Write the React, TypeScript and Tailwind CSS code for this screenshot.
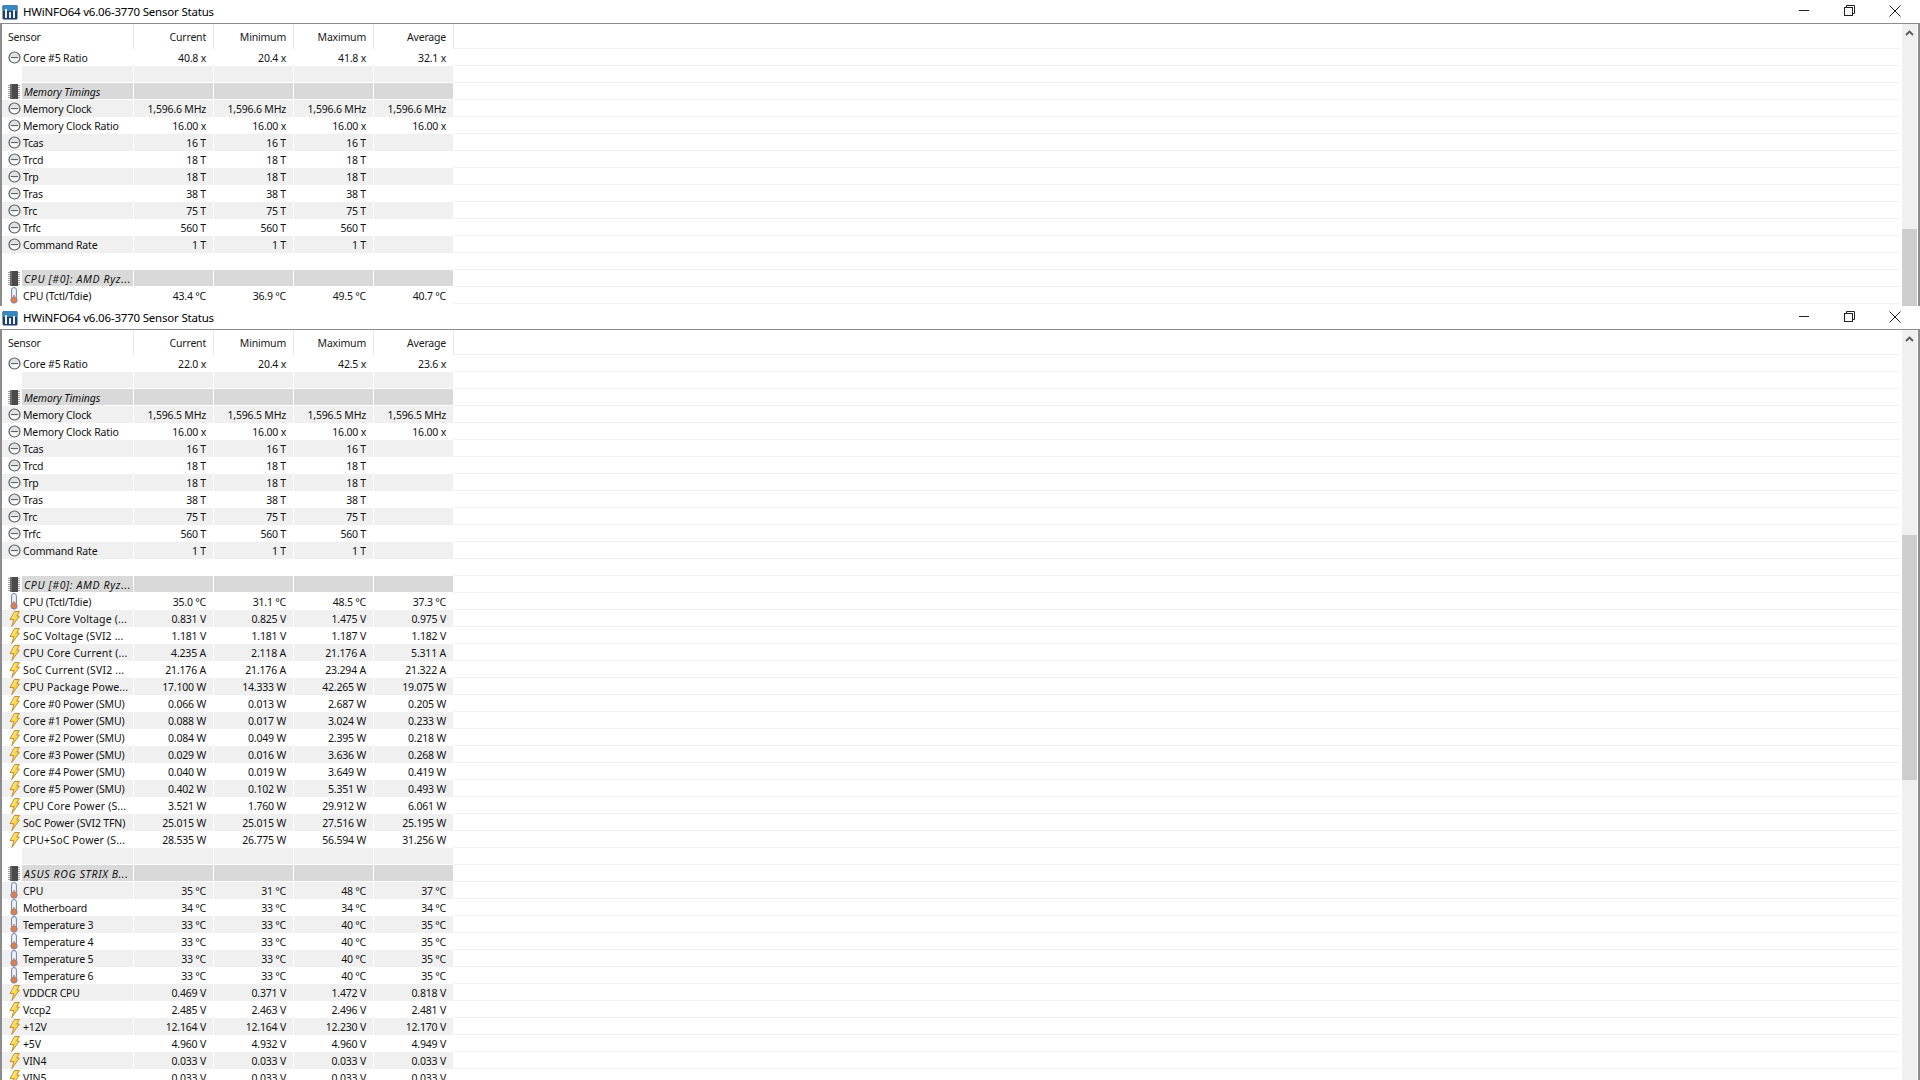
import React from "react";

type Kind = "clock" | "temp" | "volt";
type Row =
  | { t: "blank" }
  | { t: "section"; name: string }
  | { t: "row"; icon: Kind; name: string; v: string[] };

const r = (icon: Kind, name: string, a: string, b: string, c: string, d: string): Row => ({ t: "row", icon, name, v: [a, b, c, d] });
const blank: Row = { t: "blank" };
const sec = (name: string): Row => ({ t: "section", name });

const timings: Row[] = [
  r("clock", "Tcas", "16 T", "16 T", "16 T", ""),
  r("clock", "Trcd", "18 T", "18 T", "18 T", ""),
  r("clock", "Trp", "18 T", "18 T", "18 T", ""),
  r("clock", "Tras", "38 T", "38 T", "38 T", ""),
  r("clock", "Trc", "75 T", "75 T", "75 T", ""),
  r("clock", "Trfc", "560 T", "560 T", "560 T", ""),
  r("clock", "Command Rate", "1 T", "1 T", "1 T", ""),
];

const top: Row[] = [
  r("clock", "Core #5 Ratio", "40.8 x", "20.4 x", "41.8 x", "32.1 x"),
  blank,
  sec("Memory Timings"),
  r("clock", "Memory Clock", "1,596.6 MHz", "1,596.6 MHz", "1,596.6 MHz", "1,596.6 MHz"),
  r("clock", "Memory Clock Ratio", "16.00 x", "16.00 x", "16.00 x", "16.00 x"),
  ...timings,
  blank,
  sec("CPU [#0]: AMD Ryz..."),
  r("temp", "CPU (Tctl/Tdie)", "43.4 °C", "36.9 °C", "49.5 °C", "40.7 °C"),
];

const bottom: Row[] = [
  r("clock", "Core #5 Ratio", "22.0 x", "20.4 x", "42.5 x", "23.6 x"),
  blank,
  sec("Memory Timings"),
  r("clock", "Memory Clock", "1,596.5 MHz", "1,596.5 MHz", "1,596.5 MHz", "1,596.5 MHz"),
  r("clock", "Memory Clock Ratio", "16.00 x", "16.00 x", "16.00 x", "16.00 x"),
  ...timings,
  blank,
  sec("CPU [#0]: AMD Ryz..."),
  r("temp", "CPU (Tctl/Tdie)", "35.0 °C", "31.1 °C", "48.5 °C", "37.3 °C"),
  r("volt", "CPU Core Voltage (...", "0.831 V", "0.825 V", "1.475 V", "0.975 V"),
  r("volt", "SoC Voltage (SVI2 ...", "1.181 V", "1.181 V", "1.187 V", "1.182 V"),
  r("volt", "CPU Core Current (...", "4.235 A", "2.118 A", "21.176 A", "5.311 A"),
  r("volt", "SoC Current (SVI2 ...", "21.176 A", "21.176 A", "23.294 A", "21.322 A"),
  r("volt", "CPU Package Powe...", "17.100 W", "14.333 W", "42.265 W", "19.075 W"),
  r("volt", "Core #0 Power (SMU)", "0.066 W", "0.013 W", "2.687 W", "0.205 W"),
  r("volt", "Core #1 Power (SMU)", "0.088 W", "0.017 W", "3.024 W", "0.233 W"),
  r("volt", "Core #2 Power (SMU)", "0.084 W", "0.049 W", "2.395 W", "0.218 W"),
  r("volt", "Core #3 Power (SMU)", "0.029 W", "0.016 W", "3.636 W", "0.268 W"),
  r("volt", "Core #4 Power (SMU)", "0.040 W", "0.019 W", "3.649 W", "0.419 W"),
  r("volt", "Core #5 Power (SMU)", "0.402 W", "0.102 W", "5.351 W", "0.493 W"),
  r("volt", "CPU Core Power (S...", "3.521 W", "1.760 W", "29.912 W", "6.061 W"),
  r("volt", "SoC Power (SVI2 TFN)", "25.015 W", "25.015 W", "27.516 W", "25.195 W"),
  r("volt", "CPU+SoC Power (S...", "28.535 W", "26.775 W", "56.594 W", "31.256 W"),
  blank,
  sec("ASUS ROG STRIX B..."),
  r("temp", "CPU", "35 °C", "31 °C", "48 °C", "37 °C"),
  r("temp", "Motherboard", "34 °C", "33 °C", "34 °C", "34 °C"),
  r("temp", "Temperature 3", "33 °C", "33 °C", "40 °C", "35 °C"),
  r("temp", "Temperature 4", "33 °C", "33 °C", "40 °C", "35 °C"),
  r("temp", "Temperature 5", "33 °C", "33 °C", "40 °C", "35 °C"),
  r("temp", "Temperature 6", "33 °C", "33 °C", "40 °C", "35 °C"),
  r("volt", "VDDCR CPU", "0.469 V", "0.371 V", "1.472 V", "0.818 V"),
  r("volt", "Vccp2", "2.485 V", "2.463 V", "2.496 V", "2.481 V"),
  r("volt", "+12V", "12.164 V", "12.164 V", "12.230 V", "12.170 V"),
  r("volt", "+5V", "4.960 V", "4.932 V", "4.960 V", "4.949 V"),
  r("volt", "VIN4", "0.033 V", "0.033 V", "0.033 V", "0.033 V"),
  r("volt", "VIN5", "0.033 V", "0.033 V", "0.033 V", "0.033 V"),
];

function ClockIcon() {
  return (
    <svg width="13" height="13" viewBox="0 0 13 13">
      <circle cx="6.5" cy="6.5" r="5.5" fill="#dfe2e2" stroke="#5a6062" strokeWidth="1.2" />
      <path d="M2.5 9 A4.6 4.6 0 0 0 10.5 9 L10.5 7 H2.5 Z" fill="#fafafa" />
      <path d="M3 6.6 H10" stroke="#555" strokeWidth="1" />
    </svg>
  );
}

function TempIcon() {
  return (
    <svg width="10" height="17" viewBox="0 0 10 17">
      <rect x="2.6" y="0.5" width="4.8" height="12" rx="2.4" fill="#eef2fa" stroke="#6c80ac" />
      <circle cx="5" cy="13" r="3.2" fill="#d9804f" stroke="#7f86a8" strokeWidth="0.9" />
      <rect x="4.3" y="8" width="1.4" height="4" fill="#d9804f" />
    </svg>
  );
}

function VoltIcon() {
  return (
    <svg width="11" height="16" viewBox="0 0 11 16">
      <path d="M5.5 0.5 H10.4 L7.8 5 H10.4 L2.8 15.6 L4.8 8.6 H1 Z" fill="#f9d84e" stroke="#b9852a" strokeWidth="0.9" strokeLinejoin="round" />
      <path d="M6.2 1.6 L3.2 7.4" stroke="#fff3b0" strokeWidth="1" />
    </svg>
  );
}

function ChipIcon() {
  return (
    <svg width="12" height="15" viewBox="0 0 12 15">
      <path d="M0 1.5H12M0 3.5H12M0 5.5H12M0 7.5H12M0 9.5H12M0 11.5H12M0 13.5H12" stroke="#a0a0a0" strokeWidth="1" />
      <rect x="2" y="0" width="8" height="15" fill="#4a4a4a" />
      <rect x="2" y="0" width="2" height="15" fill="#6c6c6c" />
    </svg>
  );
}

function AppIcon() {
  return (
    <svg width="16" height="16" viewBox="0 0 16 16">
      <rect x="0.5" y="1" width="15" height="14.5" rx="1.5" fill="#1c3f68" />
      <rect x="0.5" y="1" width="15" height="6" rx="1.5" fill="#3a86bd" />
      <rect x="3" y="5" width="2" height="9" fill="#e8f0f6" />
      <rect x="7" y="8" width="2" height="6" fill="#e8f0f6" />
      <rect x="11" y="6" width="2" height="8" fill="#e8f0f6" />
    </svg>
  );
}

const icons = { clock: <ClockIcon />, temp: <TempIcon />, volt: <VoltIcon /> };

function DataRow({ row, index }: { row: Row; index: number }) {
  const gray = index % 2 === 1;
  if (row.t === "row") {
    const bg = gray ? "bg-[#f0f0f0]" : "bg-white";
    const track = row.name.endsWith("...") ? "tracking-[0.15px]" : "tracking-[-0.15px]";
    return (
      <div className="flex h-[17px] items-center">
        <div className={`w-[133px] h-full shrink-0 flex items-center border-r border-white ${bg}`}>
          <div className="w-[22px] h-full shrink-0 flex items-center justify-center pl-[4px]">{icons[row.icon]}</div>
          <span className={`whitespace-nowrap pt-[2px] ${track}`}>{row.name}</span>
        </div>
        {row.v.map((v, i) => (
          <div key={i} className={`w-[80px] h-full shrink-0 flex items-center justify-end pr-[7px] pt-[2px] border-r border-white whitespace-nowrap ${bg}`}>
            {v}
          </div>
        ))}
        <div className="flex-1 h-full border-b border-[#f0f0f0]" />
      </div>
    );
  }
  const section = row.t === "section";
  const wide = section && row.name.endsWith("...");
  const bg = section ? "bg-[#d9d9d9]" : gray ? "bg-[#f0f0f0]" : "bg-white";
  return (
    <div className="flex h-[17px] items-center">
      <div className="w-[21px] h-full shrink-0 flex items-center justify-center pl-[5px]">{section && <ChipIcon />}</div>
      <div className={`w-[112px] h-full shrink-0 flex items-center pl-[2px] pt-[3px] border-r border-white border-b ${bg}`}>
        {section && <span className={`italic whitespace-nowrap ${wide ? "tracking-[0.65px]" : "tracking-[-0.1px]"}`}>{row.name}</span>}
      </div>
      {[0, 1, 2, 3].map((i) => (
        <div key={i} className={`w-[80px] h-full shrink-0 border-r border-b border-white ${bg}`} />
      ))}
      <div className="flex-1 h-full border-b border-[#f0f0f0]" />
    </div>
  );
}

function Scrollbar({ offset, thumb }: { offset: string; thumb: string }) {
  return (
    <div className="w-[15px] ml-[2px] mr-[1px] shrink-0 bg-[#f0f0f0] flex flex-col overflow-hidden">
      <div className="h-[17px] shrink-0 flex items-center justify-center">
        <svg width="9" height="6" viewBox="0 0 9 6">
          <path d="M1 5 L4.5 1.5 L8 5" fill="none" stroke="#5a5a5a" strokeWidth="1.8" />
        </svg>
      </div>
      <div className={`${offset} shrink-0`} />
      <div className={`${thumb} shrink-0 bg-[#cdcdcd]`} />
    </div>
  );
}

function Window({ rows, heightClass, offset, thumb }: { rows: Row[]; heightClass: string; offset: string; thumb: string }) {
  return (
    <div className={`${heightClass} flex flex-col overflow-hidden bg-white`}>
      <div className="h-[23px] shrink-0 flex items-center bg-white">
        <div className="w-[22px] pl-[2px] shrink-0 flex items-center"><AppIcon /></div>
        <span className="text-[11.5px] tracking-[-0.2px] text-black ml-[1px]">HWiNFO64 v6.06-3770 Sensor Status</span>
        <div className="flex-1" />
        <div className="flex items-center pb-[2px] mr-[2px]">
          <div className="w-[46px] flex justify-center">
            <svg width="10" height="10" viewBox="0 0 10 10"><path d="M0 4.5H10" stroke="#222" strokeWidth="1" /></svg>
          </div>
          <div className="w-[45px] flex justify-center">
            <svg width="11" height="11" viewBox="0 0 11 11" fill="none" stroke="#222"><rect x="0.5" y="2.5" width="8" height="8" /><path d="M2.5 2.5V0.5H10.5V8.5H8.5" /></svg>
          </div>
          <div className="w-[46px] flex justify-center">
            <svg width="12" height="12" viewBox="0 0 12 12" stroke="#222" strokeWidth="1"><path d="M0.5 0.5L11.5 11.5M11.5 0.5L0.5 11.5" /></svg>
          </div>
        </div>
      </div>
      <div className="flex flex-1 min-h-0 border-t border-[#8c8c8c] border-l-2 border-r-2 border-l-[#8c8c8c] border-r-[#8c8c8c]">
        <div className="flex-1 min-w-0 overflow-hidden">
          <div className="flex h-[25px] items-center text-[#1a1a1a] -ml-[1px]">
            <div className="w-[133px] h-full shrink-0 flex items-center pl-[7px] pt-[2px] border-r border-[#e8e8e8]">Sensor</div>
            {["Current", "Minimum", "Maximum", "Average"].map((h) => (
              <div key={h} className="w-[80px] h-full shrink-0 flex items-center justify-end pr-[7px] pt-[2px] border-r border-[#e8e8e8]">{h}</div>
            ))}
            <div className="flex-1 h-full border-b border-[#f0f0f0]" />
          </div>
          <div className="-ml-[1px]">
            {rows.map((row, i) => (
              <DataRow key={i} row={row} index={i} />
            ))}
          </div>
        </div>
        <Scrollbar offset={offset} thumb={thumb} />
      </div>
    </div>
  );
}

export default function App() {
  return (
    <div className="w-[1920px] h-[1080px] overflow-hidden bg-white text-[10.5px] tracking-[-0.2px] text-[#111] font-['Noto_Sans',sans-serif]">
      <Window rows={top} heightClass="h-[306px]" offset="h-[188px]" thumb="h-[80px]" />
      <Window rows={bottom} heightClass="h-[774px]" offset="h-[188px]" thumb="h-[245px]" />
    </div>
  );
}
